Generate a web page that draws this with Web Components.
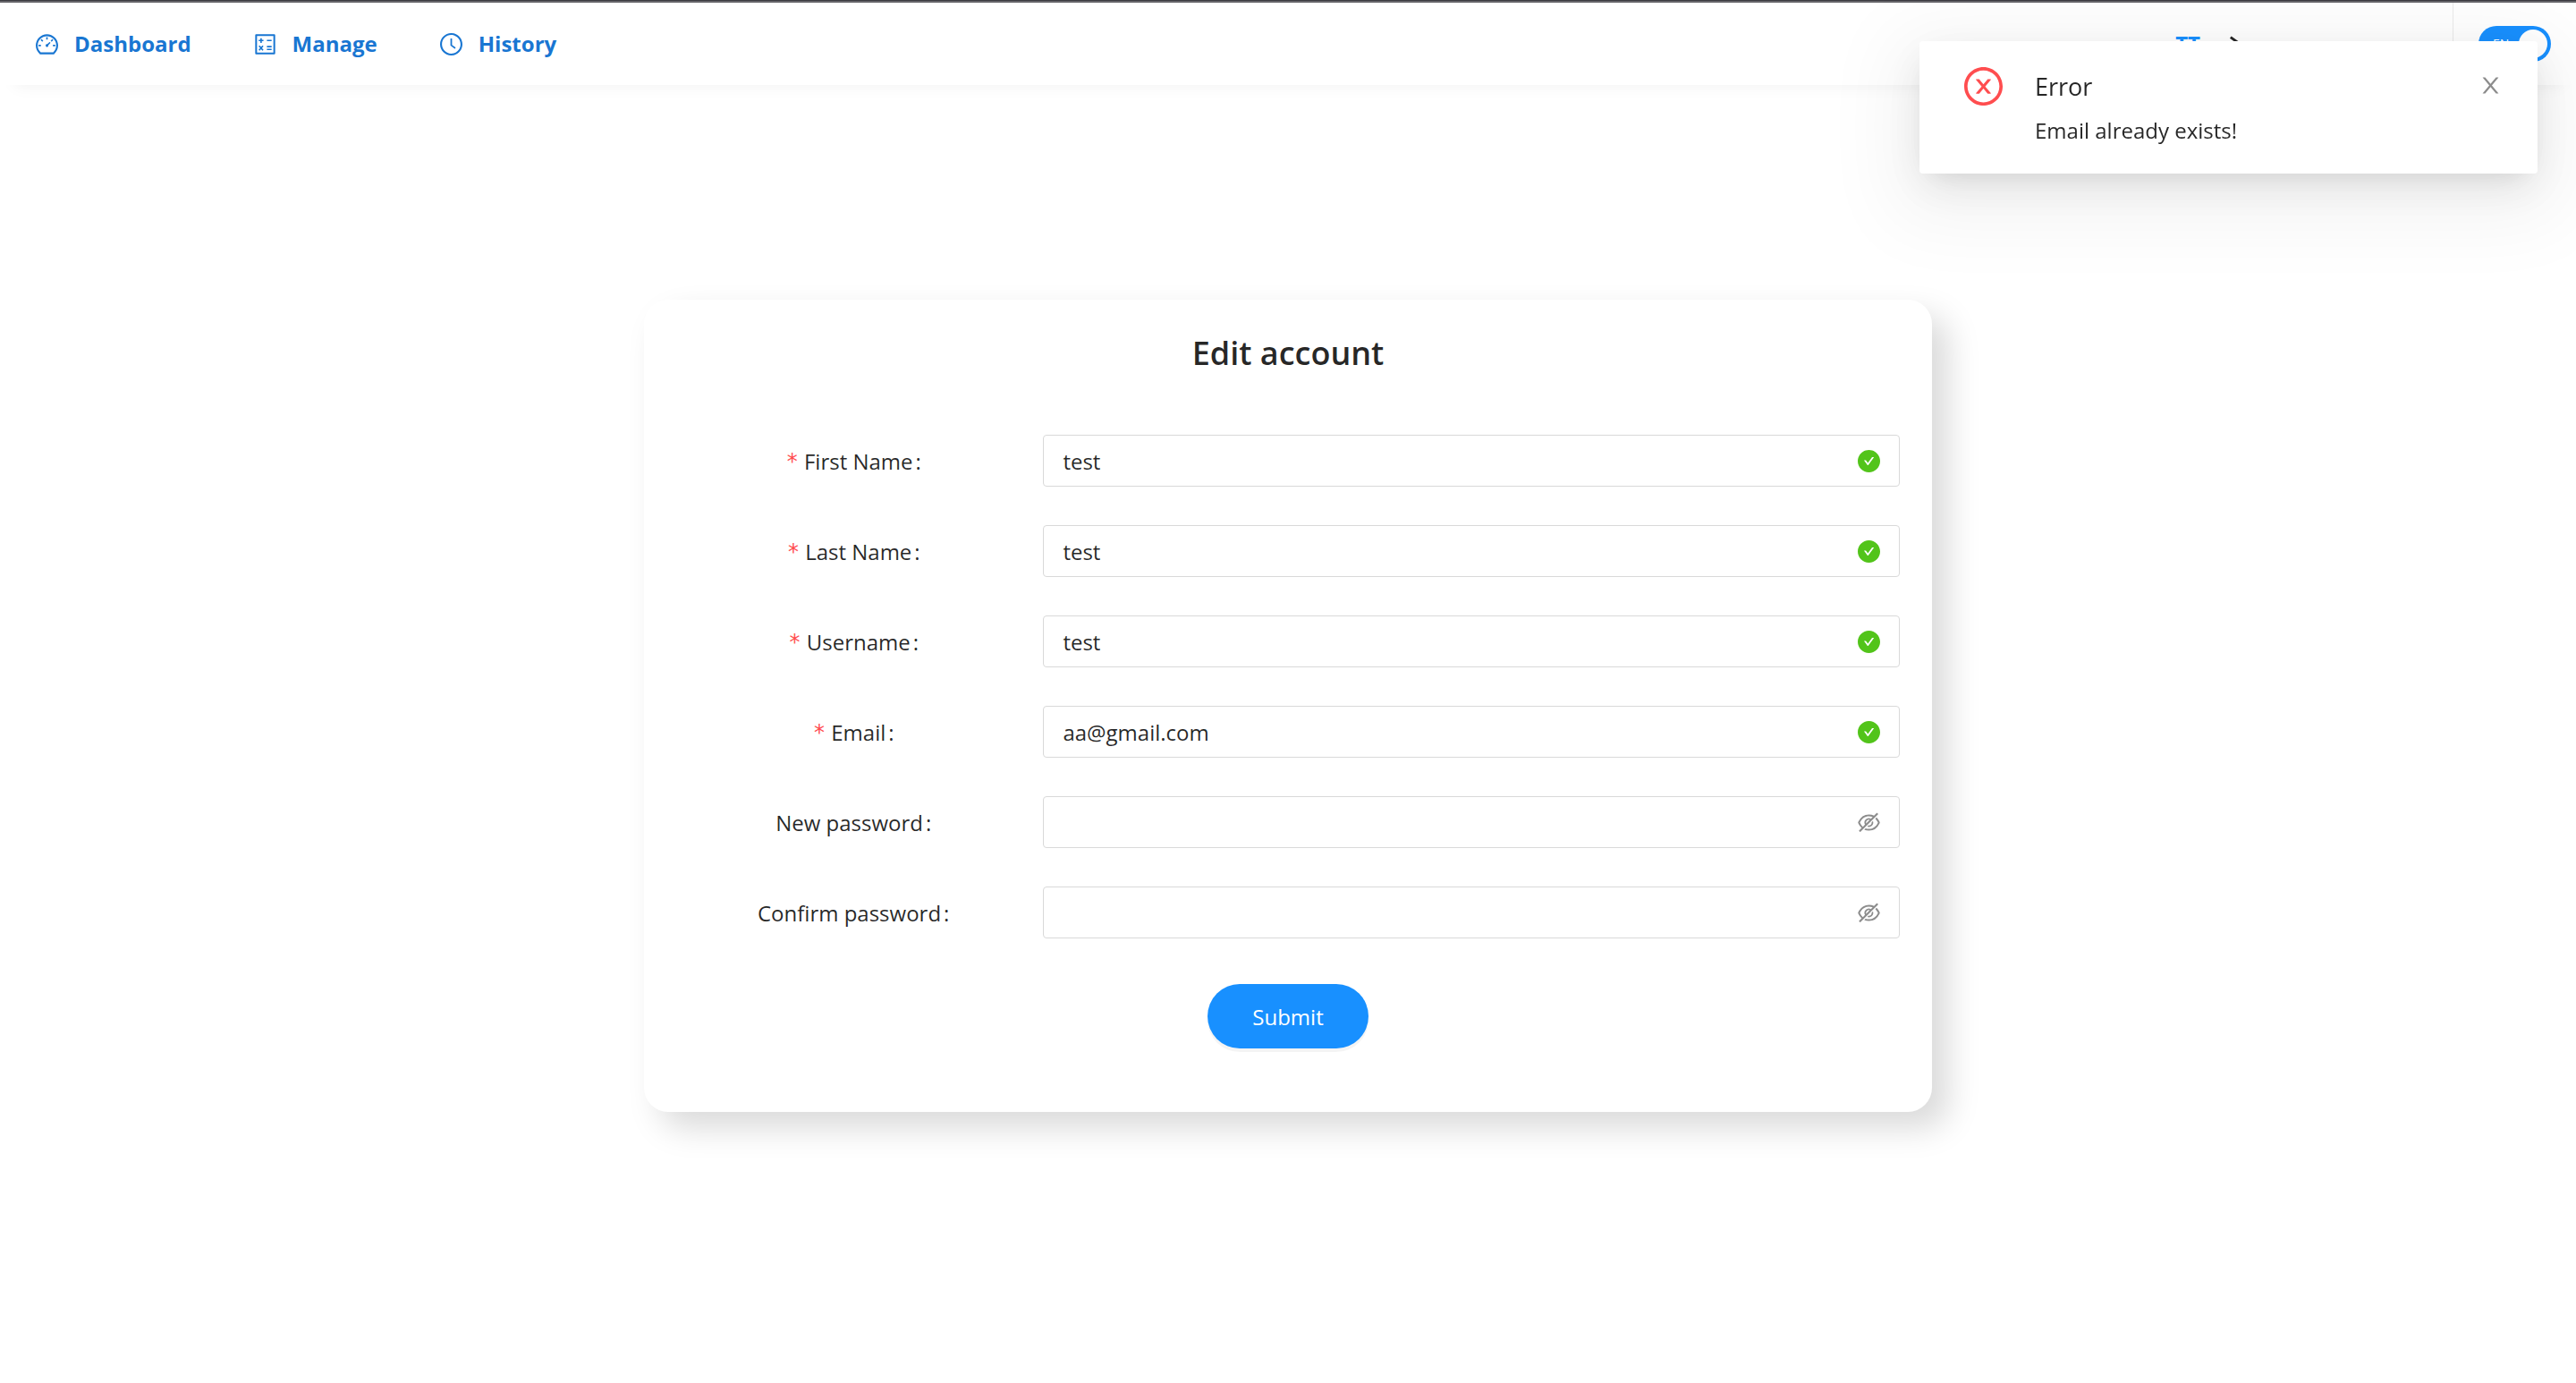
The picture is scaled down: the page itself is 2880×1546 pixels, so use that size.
<!DOCTYPE html>
<html lang="en">
<head>
<meta charset="utf-8">
<title>Edit account</title>
<style>
html, body { margin: 0; }
body {
  min-height: 100vh;
  background: #fff;
  color: rgba(0, 0, 0, .85);
  font: 24px/40px "Open Sans", "Noto Sans", sans-serif;
}
</style>
</head>
<body>
<account-page></account-page>

<script>
const ICONS = {
  dashboard: '<path d="M924.8 385.6a446.7 446.7 0 0 0-96-142.4 446.7 446.7 0 0 0-142.4-96C631.1 123.8 572.5 112 512 112s-119.1 11.8-174.4 35.2a446.7 446.7 0 0 0-142.4 96 446.7 446.7 0 0 0-96 142.4C75.8 440.9 64 499.5 64 560c0 132.7 58.3 257.7 159.9 343.1l1.7 1.4c5.8 4.8 13.1 7.5 20.6 7.5h531.7c7.5 0 14.8-2.7 20.6-7.5l1.7-1.4C901.7 817.7 960 692.7 960 560c0-60.5-11.9-119.1-35.2-174.4zM761.4 836H262.6A371.12 371.12 0 0 1 140 560c0-99.4 38.7-192.8 109-263 70.3-70.3 163.7-109 263-109 99.4 0 192.8 38.7 263 109 70.3 70.3 109 163.7 109 263 0 105.6-44.5 205.5-122.6 276zM623.5 421.5a8.03 8.03 0 0 0-11.3 0L527.7 506c-18.7-5-39.4-.2-54.1 14.5a55.95 55.95 0 0 0 0 79.2 55.95 55.95 0 0 0 79.2 0 55.87 55.87 0 0 0 14.5-54.1l84.5-84.5c3.1-3.1 3.1-8.2 0-11.3l-28.3-28.3zM490 320h44c4.400 0 8-3.600 8-8v-80c0-4.400-3.600-8-8-8h-44c-4.400 0-8 3.600-8 8v80c0 4.400 3.600 8 8 8zm260 218v44c0 4.400 3.600 8 8 8h80c4.400 0 8-3.600 8-8v-44c0-4.400-3.600-8-8-8h-80c-4.400 0-8 3.600-8 8zm12.700-197.200l-31.100-31.100a8.030 8.030 0 0 0-11.300 0l-56.600 56.600a8.030 8.030 0 0 0 0 11.300l31.100 31.100c3.100 3.100 8.200 3.100 11.300 0l56.600-56.600c3.100-3.100 3.100-8.200 0-11.300zm-458.600-31.100a8.030 8.030 0 0 0-11.300 0l-31.100 31.100a8.030 8.030 0 0 0 0 11.300l56.600 56.600c3.100 3.100 8.200 3.100 11.300 0l31.100-31.100c3.100-3.100 3.100-8.200 0-11.300l-56.600-56.600zM262 530h-80c-4.400 0-8 3.600-8 8v44c0 4.400 3.600 8 8 8h80c4.400 0 8-3.600 8-8v-44c0-4.400-3.600-8-8-8z"/>',
  manage: '<path d="M880 112H144c-17.700 0-32 14.300-32 32v736c0 17.700 14.300 32 32 32h736c17.700 0 32-14.300 32-32V144c0-17.700-14.300-32-32-32zm-40 728H184V184h656v656z"/><path fill="none" stroke="currentColor" stroke-width="58" d="M252 360h190M347 266v188M580 360h190M580 606h190M580 720h190M268 574l156 178M424 574L268 752"/>',
  clock: '<path d="M512 64C264.600 64 64 264.600 64 512s200.600 448 448 448 448-200.600 448-448S759.400 64 512 64zm0 820c-205.400 0-372-166.600-372-372s166.600-372 372-372 372 166.600 372 372-166.600 372-372 372z"/><path d="M686.700 638.600L544.100 535.500V288c0-4.400-3.600-8-8-8H488c-4.400 0-8 3.600-8 8v275.400c0 2.600 1.200 5 3.300 6.500l165.400 120.600c3.600 2.600 8.600 1.800 11.200-1.700l28.600-39c2.600-3.700 1.800-8.700-1.800-11.200z"/>',
  check: '<path d="M512 64C264.600 64 64 264.600 64 512s200.600 448 448 448 448-200.600 448-448S759.400 64 512 64zm193.500 301.700l-210.600 292a31.800 31.800 0 0 1-51.700 0L318.500 484.900c-3.800-5.300 0-12.700 6.500-12.700h46.900c10.200 0 19.900 4.900 25.900 13.300l71.200 98.800 157.200-218c6-8.300 15.600-13.300 25.900-13.300H699c6.500 0 10.300 7.400 6.500 12.700z"/>',
  eye: '<path d="M942.200 486.200Q889.470 375.110 816.700 305l-50.880 50.880C807.310 395.530 843.450 447.400 874.700 512 791.500 684.200 673.400 766 512 766q-72.670 0-133.870-22.380L323 798.750Q408 838 512 838q288.300 0 430.200-300.300a60.290 60.290 0 0 0 0-51.500zm-63.570-320.640L836 122.880a8 8 0 0 0-11.320 0L715.310 232.200Q624.860 186 512 186q-288.300 0-430.200 300.300a60.300 60.300 0 0 0 0 51.500q56.690 119.400 136.500 191.410L112.480 835a8 8 0 0 0 0 11.310L155.170 889a8 8 0 0 0 11.310 0l712.150-712.120a8 8 0 0 0 0-11.320zM149.300 512C232.600 339.800 350.700 258 512 258c54.540 0 104.130 9.360 149.120 28.390l-70.300 70.300a176 176 0 0 0-238.130 238.130l-83.420 83.420C223.100 637.490 183.300 582.280 149.300 512zm246.700 0a112.110 112.110 0 0 1 146.200-106.690L401.310 546.200A112 112 0 0 1 396 512z"/><path d="M508 624c-3.460 0-6.870-.16-10.250-.47l-52.820 52.820a176.090 176.090 0 0 0 227.420-227.420l-52.820 52.820c.31 3.380.47 6.790.47 10.250a111.940 111.940 0 0 1-112 112z"/>',
  error: '<path d="M685.400 354.800c0-4.400-3.600-8-8-8l-66 .3L512 465.600l-99.300-118.400-66.100-.3c-4.400 0-8 3.500-8 8 0 1.900.7 3.700 1.900 5.200l130.100 155L340.500 670a8.320 8.320 0 0 0-1.900 5.200c0 4.400 3.600 8 8 8l66.100-.3L512 564.400l99.300 118.400 66 .3c4.400 0 8-3.500 8-8 0-1.900-.7-3.700-1.900-5.200L553.500 515l130.100-155c1.200-1.400 1.800-3.300 1.800-5.200z"/><path d="M512 65C264.600 65 64 265.600 64 513s200.600 448 448 448 448-200.600 448-448S759.400 65 512 65zm0 820c-205.400 0-372-166.600-372-372s166.600-372 372-372 372 166.600 372 372-166.600 372-372 372z"/>',
  close: '<path d="M563.800 512l262.500-312.900c4.400-5.200.7-13.100-6.100-13.100h-79.800c-4.700 0-9.200 2.100-12.300 5.700L511.600 449.800 295.100 191.700c-3-3.600-7.500-5.700-12.300-5.700H203c-6.800 0-10.500 7.900-6.100 13.100L459.400 512 196.900 824.900A7.950 7.950 0 0 0 203 838h79.800c4.700 0 9.200-2.100 12.300-5.700l216.500-258.100 216.500 258.100c3 3.600 7.500 5.700 12.300 5.700h79.800c6.800 0 10.500-7.900 6.100-13.100L563.800 512z"/>',
  arrow: '<path fill="none" stroke="currentColor" stroke-width="120" d="M300 210L720 512 300 814"/>'
};

function define(name, html) {
  customElements.define(name, class extends HTMLElement {
    constructor() {
      super();
      this.attachShadow({ mode: 'open' });
    }
    connectedCallback() {
      this.shadowRoot.innerHTML = typeof html === 'function' ? html(this) : html;
    }
  });
}

define('ui-icon', el => `
<style>
:host { display: block; flex: none; width: var(--icon-size, 25px); height: var(--icon-size, 25px); }
svg { display: block; width: 100%; height: 100%; fill: currentColor; }
</style>
<svg viewBox="64 64 896 896" aria-hidden="true">${ICONS[el.getAttribute('name')]}</svg>`);

define('nav-item', el => `
<style>
:host { display: block; }
a { display: flex; align-items: center; gap: 18px; color: #1976d2; font-weight: 700; text-decoration: none; }
</style>
<a href="#"><ui-icon name="${el.getAttribute('icon')}"></ui-icon><span><slot></slot></span></a>`);

define('user-menu', `
<style>
:host { display: block; }
button { display: flex; align-items: center; gap: 28px; padding: 0; border: 0; background: none; font: inherit; font-weight: 700; color: #1890ff; }
ui-icon { color: rgba(0, 0, 0, .85); --icon-size: 22px; }
</style>
<button type="button"><span><slot></slot></span><ui-icon name="arrow"></ui-icon></button>`);

define('language-switch', `
<style>
:host { display: block; }
button { display: flex; align-items: center; justify-content: space-between; box-sizing: border-box; width: 81px; height: 40px; padding: 0 4px 0 16px; border: 0; border-radius: 20px; background: #1890ff; color: #fff; font: inherit; font-size: 14px; }
i { display: block; width: 32px; height: 32px; border-radius: 50%; background: #fff; }
</style>
<button type="button" role="switch" aria-checked="true"><span><slot></slot></span><i></i></button>`);

define('top-bar', `
<style>
:host { display: flex; align-items: stretch; justify-content: space-between; box-sizing: border-box; height: 95px; padding-top: 2px; border-top: 1px solid #3b3a40; background: #fff; box-shadow: inset 0 2px 0 #656469, 0 18px 16px -16px rgba(0, 0, 0, .05); }
nav { display: flex; align-items: center; gap: 70px; padding-left: 40px; }
.tools { display: flex; }
.user { display: flex; align-items: center; padding-right: 232px; }
.lang { display: flex; align-items: center; padding: 0 28px; border-left: 1px solid #eaeaea; }
</style>
<nav aria-label="Main">
  <nav-item icon="dashboard">Dashboard</nav-item>
  <nav-item icon="manage">Manage</nav-item>
  <nav-item icon="clock">History</nav-item>
</nav>
<div class="tools">
  <div class="user"><user-menu>TT</user-menu></div>
  <div class="lang"><language-switch>EN</language-switch></div>
</div>`);

define('form-field', el => {
  const password = el.hasAttribute('password');
  return `
<style>
:host { display: grid; grid-template-columns: 3fr 7fr; align-items: center; }
label { display: flex; align-items: center; justify-content: center; padding: 2px 14px 0 0; }
.req { margin-right: 6px; color: #ff4d4f; font-family: "DejaVu Sans Mono", monospace; }
.colon { margin-left: 3px; }
.box { display: flex; align-items: center; box-sizing: border-box; height: 58px; padding: 0 21px; border: 1px solid #d9d9d9; border-radius: 4px; background: #fff; }
input { flex: 1; min-width: 0; padding: 2px 0 0; border: 0; outline: 0; background: none; color: inherit; font: inherit; }
ui-icon { color: #52c41a; }
button { padding: 0; border: 0; background: none; }
button ui-icon { color: #8c8c8c; }
</style>
<label for="f">${el.hasAttribute('required') ? '<span class="req">*</span>' : ''}<span><slot></slot></span><span class="colon">:</span></label>
<div class="box">
  <input id="f" type="${password ? 'password' : 'text'}" value="${el.getAttribute('value') || ''}">
  ${password ? '<button type="button" aria-label="Show password"><ui-icon name="eye"></ui-icon></button>' : '<ui-icon name="check"></ui-icon>'}
</div>`;
});

define('account-form', `
<style>
:host { display: block; box-sizing: border-box; width: 50%; margin: 240px auto 0; padding: 35px 36px 71px; border-radius: 27px; background: #fff; box-shadow: 18px 18px 36px rgba(0, 0, 0, .15); }
h1 { margin: 0 0 66px; text-align: center; font-size: 36px; line-height: 50px; font-weight: 600; }
form { display: grid; gap: 43px; }
.submit { justify-self: center; width: 180px; height: 72px; margin-top: 8px; padding: 2px 0 0; border: 0; border-radius: 36px; background: #1890ff; box-shadow: 0 4px 0 rgba(0, 0, 0, .045); color: #fff; font: inherit; }
</style>
<h1>Edit account</h1>
<form>
  <form-field required value="test">First Name</form-field>
  <form-field required value="test">Last Name</form-field>
  <form-field required value="test">Username</form-field>
  <form-field required value="aa@gmail.com">Email</form-field>
  <form-field password>New password</form-field>
  <form-field password>Confirm password</form-field>
  <button class="submit" type="button">Submit</button>
</form>`);

define('error-toast', `
<style>
:host { position: fixed; top: 46px; right: 43px; display: flex; align-items: flex-start; box-sizing: border-box; width: 691px; padding: 29px 40px 28px 50px; border-radius: 4px; background: #fff; box-shadow: 0 11px 29px -14px rgba(0, 0, 0, .12), 0 16px 50px rgba(0, 0, 0, .08), 0 22px 86px 29px rgba(0, 0, 0, .05); }
.mark { --icon-size: 43px; color: #ff4d4f; }
.text { flex: 1; margin-left: 36px; }
h2 { margin: 0 0 7px; font-size: 27px; line-height: 44px; font-weight: 400; }
p { margin: 0; }
button { margin-top: 8px; padding: 0; border: 0; background: none; color: #8c8c8c; }
</style>
<ui-icon class="mark" name="error"></ui-icon>
<div class="text"><h2><slot name="title"></slot></h2><p><slot></slot></p></div>
<button type="button" aria-label="Close"><ui-icon name="close"></ui-icon></button>`);

define('account-page', `
<style>
:host { display: block; }
</style>
<top-bar></top-bar>
<main><account-form></account-form></main>
<error-toast role="alert"><span slot="title">Error</span>Email already exists!</error-toast>`);
</script>
</body>
</html>
